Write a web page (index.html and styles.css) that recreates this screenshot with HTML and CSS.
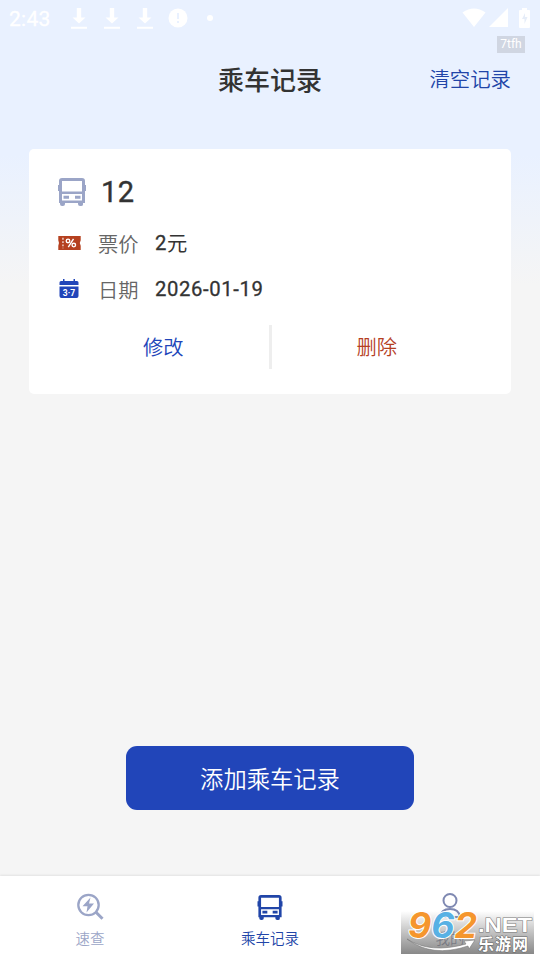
FILE: index.html
```html
<!DOCTYPE html>
<html lang="zh-CN">
<head>
<meta charset="utf-8">
<title>乘车记录</title>
<link rel="stylesheet" href="styles.css">
</head>
<body>
<svg class="defs" aria-hidden="true">
  <symbol id="download" viewBox="0 0 16 22"><path d="M5.8 0h4.400v9.500h4.300L8 15.500 1.500 9.500h4.300zM0 18.700h16v2H0z"/></symbol>
  <symbol id="bus" viewBox="0 0 28 28"><path fill-rule="evenodd" d="M4 0h20q3 0 3 3v4h1v6h-1v12h-2v1.500q0 1.500-2 1.500h-1q-2 0-2-2v-1H7v1q0 2-2 2H4q-2 0-2-2v-1H1V13H0V7h1V3q0-3 3-3zM4 3v10.500h20V3zM4 16V22.500h20V16zM5.500 17.700H11v3H5.500zM17 17.700h5.500v3H17z"/></symbol>
</svg>
<div class="screen">
  <header class="statusbar">
    <span class="clock">2:43</span>
    <div class="notices">
      <svg class="dl"><use href="#download"/></svg>
      <svg class="dl"><use href="#download"/></svg>
      <svg class="dl"><use href="#download"/></svg>
      <svg class="alert" viewBox="0 0 20 20"><circle cx="10" cy="10" r="9.500" fill="#fff"/><path d="M10 5v6M10 13v2" stroke="#e9f1ff" stroke-width="2"/></svg>
      <i class="dot"></i>
    </div>
    <div class="signals">
      <svg width="24" height="20" viewBox="0 0 24 20"><path d="M.5 4.500Q12-3.500 23.500 4.500L12 19z"/></svg>
      <svg width="19" height="19" viewBox="0 0 19 19"><path d="M19 0v19H0z"/></svg>
      <svg class="battery" width="11" height="20" viewBox="0 0 11 20"><path d="M3 0h5v2h2q1 0 1 1v16q0 1-1 1H1q-1 0-1-1V3q0-1 1-1h2z"/><path d="M6 5L3 11h2.500v5L8.500 9H6z" fill="#e6edf8"/></svg>
    </div>
  </header>
  <div class="topbar">
    <h1>乘车记录</h1>
    <a class="clear">清空记录</a>
    <span class="tag">7tfh</span>
  </div>
  <main class="content">
    <article class="card">
      <div class="route"><svg class="bus"><use href="#bus"/></svg><b>12</b></div>
      <div class="row">
        <svg class="ticket" viewBox="0 0 24 15"><path fill="#b5401f" d="M0 0h24v4.500q-2 3 0 6V15H0v-4.500q1.500-3 0-6z"/><path d="M5 2v11" stroke="#fff" stroke-width="1.200" stroke-dasharray="2 1.500"/><g fill="none" stroke="#fff" stroke-width="1.500"><circle cx="10.400" cy="5.300" r="1.900"/><circle cx="16.600" cy="9.700" r="1.900"/><path d="M16.300 3l-5.600 9"/></g></svg>
        <span class="label">票价</span><span class="value">2<span class="unit">元</span></span>
      </div>
      <div class="row date">
        <svg class="calendar" viewBox="0 0 20 20"><path fill="#2145b9" d="M2 2h2V0h1.500v2h9V0H16v2h2q1.500 0 1.500 1.500V6H.5V3.500Q.5 2 2 2zM.5 7.500h19V17q0 2-2 2h-15q-2 0-2-2z"/><text x="10" y="16.600" text-anchor="middle">3·7</text></svg>
        <span class="label">日期</span><span class="value">2026-01-19</span>
      </div>
      <div class="actions"><a>修改</a><i></i><a class="delete">删除</a></div>
    </article>
    <button class="add">添加乘车记录</button>
  </main>
  <nav class="tabs">
    <a class="tab"><svg class="search" viewBox="0 0 28 28"><g fill="none" stroke="currentColor" stroke-width="2.300"><circle cx="12.500" cy="12" r="10.200"/><path d="M20 19.300l6.500 6.500" stroke-width="3"/></g><path fill="currentColor" d="M14.500 4.500L6.500 13.200h5l-1 6.300 7.500-9h-5z"/></svg><span>速查</span></a>
    <a class="tab active"><svg class="navbus"><use href="#bus"/></svg><span>乘车记录</span></a>
    <a class="tab mine"><svg class="person" viewBox="0 0 28 28"><g fill="none" stroke="currentColor" stroke-width="2"><circle cx="14" cy="7.500" r="6.500"/><path d="M4 24q1-8 10-8t10 8z"/></g></svg><span>我的</span></a>
    <div class="watermark">
      <svg viewBox="0 0 133 43">
        <path d="M6 28Q29 43 65 33l-2-3 11-1-6 9-1-3Q31 47 6 28z" fill="#fff" stroke="#777" stroke-width=".6"/>
        <text class="number" x="7" y="26.500" textLength="69" lengthAdjust="spacingAndGlyphs">9<tspan fill="#58b1e4">6</tspan>2</text>
        <text class="net" x="77" y="21" textLength="54" lengthAdjust="spacingAndGlyphs">.NET</text>
        <text class="site" x="77" y="38.500" textLength="50">乐游网</text>
      </svg>
    </div>
  </nav>
</div>
</body>
</html>
```
FILE: styles.css
```css
* { box-sizing: border-box; }
body { margin: 0; font-family: Roboto, "Noto Sans CJK SC", sans-serif; font-weight: 350; }
.defs { position: absolute; width: 0; height: 0; }
svg { display: block; fill: currentColor; flex: none; }
.screen { width: 540px; height: 960px; display: flex; flex-direction: column; background: linear-gradient(#e9f1ff 0, #e9f1ff 155px, #f5f5f5 285px); overflow: hidden; }
.statusbar { height: 36px; display: flex; align-items: center; padding: 0 10px 0 9px; color: #fff; }
.clock { font-size: 21px; font-weight: 400; line-height: 24px; width: 62px; padding-top: 2px; letter-spacing: .3px; -webkit-text-stroke: .3px #fff; }
.notices { display: flex; align-items: center; gap: 17px; flex: 1; }
.dl { width: 16px; height: 22px; margin-top: 1px; }
.alert { width: 20px; height: 20px; margin-left: -2px; }
.dot { width: 6px; height: 6px; border-radius: 50%; background: #fff; margin-left: 2px; }
.signals { display: flex; align-items: center; gap: 3px; margin-bottom: 1px; }
.battery { margin-left: 8px; }
.topbar { position: relative; height: 113px; display: grid; grid-template-columns: 1fr auto 1fr; padding: 26px 29px 0; align-items: start; }
h1 { margin: 0; grid-column: 2; font-size: 26px; line-height: 39px; font-weight: 500; color: #333; }
.clear { justify-self: end; font-size: 20.400px; line-height: 37px; color: #2145a8; }
.tag { position: absolute; left: 497px; top: 0; width: 28px; height: 17px; background: #d0d6e2; color: #fff; font: 12px/17px Roboto, sans-serif; text-align: center; }
.content { flex: 1; display: flex; flex-direction: column; align-items: center; justify-content: space-between; padding: 0 29px 66px; }
.card { width: 482px; height: 245px; background: #fff; border-radius: 5px; padding: 25px 29px; }
.route { display: flex; align-items: center; height: 36px; color: #9ba5c7; }
.bus { width: 28px; height: 28px; }
.route b { margin-left: 15px; font-size: 29px; line-height: 36px; font-weight: 400; -webkit-text-stroke: .4px #333; color: #333; letter-spacing: .4px; }
.row { display: flex; align-items: center; height: 46px; margin-top: 10px; }
.row.date { margin-top: 0; }
.ticket { width: 23px; height: 14px; margin-right: 17px; }
.calendar { width: 20px; height: 20px; margin: 0 19px 0 1px; }
.calendar text { font: bold 8.500px Roboto, sans-serif; fill: #fff; }
.label { width: 57px; font-size: 20.300px; line-height: 30px; padding-top: 3px; color: #666; }
.value { font-size: 20.300px; line-height: 30px; font-weight: 400; -webkit-text-stroke: .3px #333; color: #333; letter-spacing: .6px; }
.unit { position: relative; top: 1px; -webkit-text-stroke: 0; }
.actions { display: flex; align-items: center; height: 44px; margin: 13px -29px 0; font-size: 20.300px; color: #2145b9; }
.actions a { flex: 1; text-align: center; padding: 0 0 2px 29px; }
.actions i { width: 3px; height: 44px; background: #eee; }
.actions .delete { color: #b5401f; padding: 0 29px 2px 0; }
.add { width: 288px; height: 64px; padding: 3px 0 0; border: 0; border-radius: 11px; background: #2145b9; color: #fff; font: 350 23.300px/34px Roboto, "Noto Sans CJK SC", sans-serif; }
.tabs { position: relative; height: 84px; display: flex; background: #fff; box-shadow: 0 -1px 2px #00000014; }
.tab { flex: 1; display: flex; flex-direction: column; align-items: center; padding-top: 17px; color: #9ba5c7; font-size: 14.500px; line-height: 22px; }
.tab svg { width: 28px; height: 28px; margin-bottom: 8px; }
.tab.active { color: #2145a8; }
.tab .navbus { width: 26px; height: 25px; margin: 2px 0 9px; }
.tab.mine { color: #7f89b2; }
.tab.mine span { color: #50597c; }
.watermark { position: absolute; left: 401px; top: 35px; width: 133px; height: 43px; background: linear-gradient(#ffffff00, #999999a8 55%, #737373d8); }
.watermark svg { width: 133px; height: 43px; overflow: visible; }
.number { font: italic 700 35px Inter, sans-serif; fill: #f5962d; stroke: #fff; stroke-width: 2px; paint-order: stroke; }
.net { font: bold 21px "Liberation Sans", sans-serif; fill: #fff; stroke: #777; stroke-width: 1px; paint-order: stroke; }
.site { font: bold 16px "Noto Sans CJK SC", sans-serif; fill: #fff; stroke: #666; stroke-width: 1px; paint-order: stroke; }
```
